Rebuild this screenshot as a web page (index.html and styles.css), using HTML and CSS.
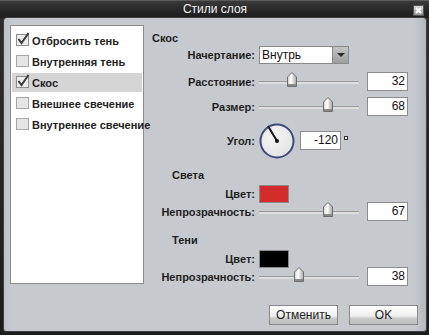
FILE: index.html
```html
<!DOCTYPE html>
<html lang="ru">
<head>
<meta charset="utf-8">
<title>Стили слоя</title>
<link rel="stylesheet" href="styles.css">
</head>
<body>
<div class="window">
  <div class="titlebar">
    <span class="title">Стили слоя</span>
    <span class="close">
      <svg width="11" height="11" viewBox="0 0 11 11">
        <defs><linearGradient id="cg" x1="0" y1="0" x2="0" y2="1"><stop offset="0" stop-color="#d8d8d8"/><stop offset="1" stop-color="#8c8c8c"/></linearGradient></defs>
        <rect x="0.5" y="0.5" width="10" height="10" fill="url(#cg)" stroke="#555"/>
        <path d="M3 3 L8 8 M8 3 L3 8" stroke="#fff" stroke-width="2"/>
      </svg>
    </span>
  </div>
  <div class="panel">
    <div class="content">
      <ul class="list">
        <li class="item">
          <svg class="cb" width="15" height="15" viewBox="0 0 15 15"><rect x="0.5" y="2.5" width="12" height="11" fill="#ececec" stroke="#8e8e8e"/><path d="M2.5 7 L5.5 11 L12.5 1" stroke="#3c3c3c" stroke-width="2" fill="none"/></svg>
          <span>Отбросить тень</span>
        </li>
        <li class="item">
          <svg class="cb" width="15" height="15" viewBox="0 0 15 15"><rect x="0.5" y="2.5" width="12" height="11" fill="#e6e6e6" stroke="#a6a6a6"/></svg>
          <span>Внутренняя тень</span>
        </li>
        <li class="item selected">
          <svg class="cb" width="15" height="15" viewBox="0 0 15 15"><rect x="0.5" y="2.5" width="12" height="11" fill="#ececec" stroke="#8e8e8e"/><path d="M2.5 7 L5.5 11 L12.5 1" stroke="#3c3c3c" stroke-width="2" fill="none"/></svg>
          <span>Скос</span>
        </li>
        <li class="item">
          <svg class="cb" width="15" height="15" viewBox="0 0 15 15"><rect x="0.5" y="2.5" width="12" height="11" fill="#e6e6e6" stroke="#a6a6a6"/></svg>
          <span>Внешнее свечение</span>
        </li>
        <li class="item">
          <svg class="cb" width="15" height="15" viewBox="0 0 15 15"><rect x="0.5" y="2.5" width="12" height="11" fill="#e6e6e6" stroke="#a6a6a6"/></svg>
          <span>Внутреннее свечение</span>
        </li>
      </ul>
      <div class="settings">
        <div class="row head h1"><span>Скос</span></div>
        <div class="row r-select">
          <span class="label">Начертание:</span>
          <div class="select"><span class="sel-text">Внутрь</span><span class="sel-btn"></span></div>
        </div>
        <div class="row r-slider s1">
          <span class="label">Расстояние:</span>
          <div class="slider"><div class="track"></div><svg class="thumb" style="left:28px" width="10" height="15" viewBox="0 0 10 15"><use href="#thumb"/></svg></div>
          <div class="num">32</div>
        </div>
        <div class="row r-slider s2">
          <span class="label">Размер:</span>
          <div class="slider"><div class="track"></div><svg class="thumb" style="left:64px" width="10" height="15" viewBox="0 0 10 15"><use href="#thumb"/></svg></div>
          <div class="num">68</div>
        </div>
        <div class="row r-angle">
          <span class="label">Угол:</span>
          <svg class="dial" width="36" height="36" viewBox="0 0 36 36">
            <defs><radialGradient id="dg" cx="0.4" cy="0.35" r="0.7"><stop offset="0" stop-color="#f6f6f6"/><stop offset="1" stop-color="#e2e2e2"/></radialGradient></defs>
            <circle cx="18" cy="18" r="16.5" fill="url(#dg)" stroke="#3e4b7a" stroke-width="2"/>
            <line x1="18" y1="18" x2="9" y2="3" stroke="#111" stroke-width="2"/>
            <circle cx="18" cy="18" r="2" fill="#111"/>
          </svg>
          <div class="num angle">-120</div>
          <span class="deg"></span>
        </div>
        <div class="row head h2"><span>Света</span></div>
        <div class="row r-color c1">
          <span class="label">Цвет:</span>
          <div class="swatch red"></div>
        </div>
        <div class="row r-slider">
          <span class="label">Непрозрачность:</span>
          <div class="slider"><div class="track"></div><svg class="thumb" style="left:64px" width="10" height="15" viewBox="0 0 10 15"><use href="#thumb"/></svg></div>
          <div class="num">67</div>
        </div>
        <div class="row head h3"><span>Тени</span></div>
        <div class="row r-color c2">
          <span class="label">Цвет:</span>
          <div class="swatch black"></div>
        </div>
        <div class="row r-slider">
          <span class="label">Непрозрачность:</span>
          <div class="slider"><div class="track"></div><svg class="thumb" style="left:35px" width="10" height="15" viewBox="0 0 10 15"><use href="#thumb"/></svg></div>
          <div class="num">38</div>
        </div>
      </div>
    </div>
    <div class="footer">
      <button class="btn">Отменить</button>
      <button class="btn">OK</button>
    </div>
  </div>
</div>
<svg class="defs" width="0" height="0">
  <defs>
    <linearGradient id="tg" x1="0" y1="0" x2="1" y2="0"><stop offset="0" stop-color="#cfcfcf"/><stop offset="0.4" stop-color="#ffffff"/><stop offset="1" stop-color="#a4a4a4"/></linearGradient>
    <g id="thumb">
      <polygon points="0.5,5 5,0.5 9.5,5 9.5,14.5 0.5,14.5" fill="url(#tg)" stroke="#6e6e6e"/>
      <rect x="1" y="12" width="8" height="2" fill="#8a8a8a"/>
    </g>
  </defs>
</svg>
</body>
</html>
```
FILE: styles.css
```css
html, body {
  margin: 0;
  padding: 0;
  background: #1e1e1e;
  overflow: hidden;
}
.window {
  width: 429px;
  height: 335px;
  background: linear-gradient(#2e2e2e, #1c1c1c);
  font-family: "Liberation Sans", Arial, sans-serif;
  color: #1f1f1f;
  box-sizing: border-box;
  border-top: 1px solid #5a5a5a;
}
.titlebar {
  height: 17px;
  display: grid;
  grid-template-columns: 1fr auto 1fr;
  align-items: center;
  background: linear-gradient(#3a3a3a, #262626 60%, #1e1e1e);
}
.title {
  grid-column: 2;
  color: #f2f2f2;
  font-size: 12px;
  line-height: 17px;
  padding-left: 1px;
}
.close {
  grid-column: 3;
  justify-self: end;
  margin-right: 5px;
  display: flex;
  margin-top: 1px;
}
.panel {
  margin: 0 3px 0 4px;
  height: 313px;
  box-sizing: border-box;
  padding: 7px 0 0 6px;
  border-radius: 3px 3px 2px 2px;
  background: linear-gradient(90deg, #bfc2c6 0px, #c6c9cd 8px, #c6c9cd 410px, #b4b7bb 422px);
  box-shadow: 0 0 0 1px #3e3e3e;
}
.content {
  display: flex;
  height: 259px;
  align-items: flex-start;
}
.list {
  list-style: none;
  margin: 0;
  padding: 5px 1px 0 1px;
  width: 134px;
  height: 259px;
  box-sizing: border-box;
  background: #ffffff;
  border: 1px solid #8c8c8c;
  display: flex;
  flex-direction: column;
  gap: 2px;
  flex-shrink: 0;
}
.item {
  height: 19px;
  display: flex;
  align-items: center;
  padding-left: 4px;
  font-size: 11px;
  font-weight: bold;
  white-space: nowrap;
  color: #222;
}
.item.selected {
  background: #d5d5d5;
}
.cb {
  flex-shrink: 0;
  margin-right: 1px;
  margin-top: -3px;
}
.settings {
  display: flex;
  flex-direction: column;
  width: 270px;
}
.row {
  display: flex;
  align-items: center;
  flex-shrink: 0;
  font-size: 11px;
  font-weight: bold;
}
.label {
  width: 111px;
  flex-shrink: 0;
  text-align: right;
  margin-right: 4px;
  white-space: nowrap;
}
.head { height: 16px; }
.h1 { margin-top: 5px; padding-left: 8px; }
.h2 { margin-top: 9px; padding-left: 28px; }
.h3 { margin-top: 11px; padding-left: 28px; }
.r-select { height: 18px; }
.r-slider { height: 19px; }
.s1 { margin-top: 8px; }
.s2 { margin-top: 6px; }
.r-angle { height: 35px; margin-top: 7px; }
.r-color { height: 16px; margin-top: 3px; }
.select {
  width: 90px;
  height: 18px;
  box-sizing: border-box;
  border: 1px solid #8a8a8a;
  background: #fff;
  display: flex;
  align-items: center;
  font-weight: normal;
  font-size: 12px;
}
.sel-text {
  flex: 1;
  padding-left: 2px;
  color: #111;
}
.sel-btn {
  width: 16px;
  height: 16px;
  box-sizing: border-box;
  border-left: 1px solid #8a8a8a;
  background: linear-gradient(#c4c4c4, #9c9c9c);
  position: relative;
}
.sel-btn::after {
  content: "";
  position: absolute;
  left: 4px;
  top: 6px;
  border-left: 4px solid transparent;
  border-right: 4px solid transparent;
  border-top: 4px solid #2a2a2a;
}
.slider {
  position: relative;
  width: 100px;
  height: 19px;
  flex-shrink: 0;
}
.track {
  margin-top: 9px;
  height: 3px;
  box-sizing: border-box;
  border-top: 1px solid #9a9a9a;
  background: #dedede;
}
.thumb {
  position: absolute;
  top: 0;
}
.num {
  width: 41px;
  height: 19px;
  box-sizing: border-box;
  margin-left: 8px;
  border: 1px solid #8c8c8c;
  background: #fff;
  font-weight: normal;
  font-size: 12px;
  line-height: 17px;
  text-align: right;
  padding-right: 2px;
  color: #111;
  flex-shrink: 0;
}
.dial {
  flex-shrink: 0;
  margin-left: 0;
}
.num.angle {
  margin-left: 5px;
}
.deg {
  width: 4px;
  height: 4px;
  box-sizing: border-box;
  border: 1px solid #333;
  margin-left: 3px;
  margin-top: -6px;
  background: #fff;
}
.swatch {
  width: 30px;
  height: 18px;
  box-sizing: border-box;
  border: 1px solid #8a8a8a;
  flex-shrink: 0;
}
.swatch.red { background: #d42b2b; }
.swatch.black { background: #000; }
.footer {
  display: flex;
  justify-content: flex-end;
  gap: 11px;
  margin-top: 21px;
  padding-right: 8px;
}
.btn {
  width: 69px;
  height: 20px;
  box-sizing: border-box;
  border: 1px solid #8a8a8a;
  background: linear-gradient(#ffffff, #eeeeee 55%, #c8c8c8 70%, #bdbdbd);
  font-family: "Liberation Sans", Arial, sans-serif;
  font-size: 12px;
  color: #222;
  padding: 0;
}
.defs {
  position: absolute;
  width: 0;
  height: 0;
}
```
